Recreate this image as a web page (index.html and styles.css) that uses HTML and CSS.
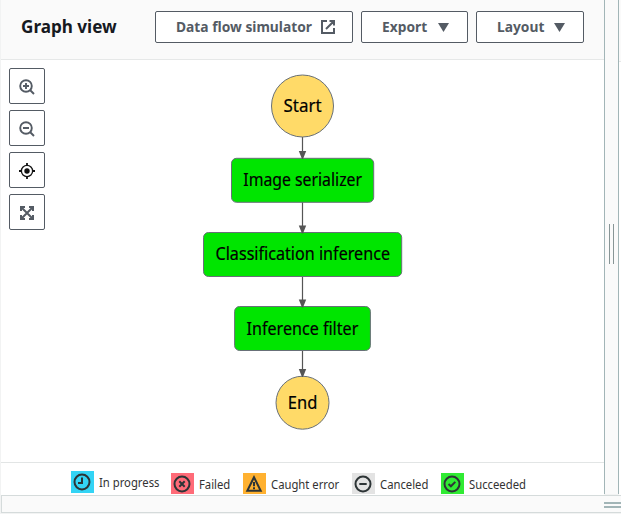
FILE: index.html
```
<!DOCTYPE html>
<html lang="en">
<head>
<meta charset="utf-8">
<title>Graph view</title>
<link rel="stylesheet" href="styles.css">
</head>
<body>
<div class="app">
  <div class="workspace">
    <main class="panel">
      <header class="header">
        <h1 class="title"><span>Graph view</span></h1>
        <button class="btn btn-sim"><span class="lbl">Data flow simulator</span>
          <svg class="ext" width="16" height="16" viewBox="0 0 16 16"><path d="M7 2H2v12h12V9M9.500 2H14v4.500M14 2L6 10" fill="none" stroke="currentColor" stroke-width="2"/></svg>
        </button>
        <button class="btn btn-export"><span class="lbl">Export</span><svg class="caret" width="11" height="9"><path d="M0 0h11L5.500 9z" fill="currentColor"/></svg></button>
        <button class="btn btn-layout"><span class="lbl">Layout</span><svg class="caret" width="11" height="9"><path d="M0 0h11L5.500 9z" fill="currentColor"/></svg></button>
      </header>
      <section class="canvas">
        <nav class="tools">
          <button class="tool" aria-label="Zoom in"><svg width="16" height="16" viewBox="0 0 16 16" fill="none" stroke="currentColor" stroke-width="1.900"><circle cx="7" cy="7" r="5.800"/><path d="M11 11l4 4M4 7h6M7 4v6"/></svg></button>
          <button class="tool" aria-label="Zoom out"><svg width="16" height="16" viewBox="0 0 16 16" fill="none" stroke="currentColor" stroke-width="1.900"><circle cx="7" cy="7" r="5.800"/><path d="M11 11l4 4M4 7h6"/></svg></button>
          <button class="tool dark" aria-label="Center"><svg width="16" height="16" viewBox="0 0 16 16" fill="none" stroke="currentColor" stroke-width="1.300"><circle cx="8" cy="8" r="5.600"/><circle cx="8" cy="8" r="2.700" fill="currentColor" stroke="none"/><path d="M8 0v3M8 13v3M0 8h3M13 8h3" stroke-width="1.800"/></svg></button>
          <button class="tool" aria-label="Fit"><svg width="16" height="16" viewBox="0 0 16 16" fill="none" stroke="currentColor" stroke-width="2"><path d="M2 2l12 12M14 2L2 14"/><path d="M6 2H2v4M10 2h4v4M2 10v4h4M14 10v4h-4"/></svg></button>
        </nav>
        <svg class="graph" width="603" height="402" viewBox="1 60 603 402">
          <path stroke="#555" stroke-width="1.200" d="M302.500 137v16M302.500 202v26M302.500 276v26M302.500 351v20"/>
          <g stroke="#687078" stroke-width="1">
            <circle cx="302.500" cy="106" r="31" fill="#ffda68"/>
            <circle cx="302.500" cy="402.700" r="26.500" fill="#ffda68"/>
            <g fill="#00e500">
              <rect x="231.500" y="158.300" width="142.200" height="44" rx="5"/>
              <rect x="203.500" y="232.500" width="198.200" height="44" rx="5"/>
              <rect x="234.600" y="306.500" width="135.800" height="44" rx="5"/>
            </g>
          </g>
          <path fill="#555" d="M298.800 151h7.400l-3.200 8h-1zM298.800 225.500h7.400l-3.200 8h-1zM298.800 299.500h7.400l-3.200 8h-1zM298.800 369h7.400l-3.200 8h-1z"/>
          <g class="node-text">
            <text x="283.500" y="112.300" textLength="38" lengthAdjust="spacingAndGlyphs">Start</text>
            <text x="243.300" y="186.300" textLength="118.700" lengthAdjust="spacingAndGlyphs">Image serializer</text>
            <text x="215.500" y="260.300" textLength="174.500" lengthAdjust="spacingAndGlyphs">Classification inference</text>
            <text x="246.600" y="335.300" textLength="111.700" lengthAdjust="spacingAndGlyphs">Inference filter</text>
            <text x="287.800" y="409.300" textLength="29.500" lengthAdjust="spacingAndGlyphs">End</text>
          </g>
        </svg>
      </section>
      <footer class="legend">
        <div class="item progress"><svg class="swatch" viewBox="0 0 23 22"><circle cx="11" cy="11" r="7.500"/><path d="M11 6.500V12H7"/></svg><span>In progress</span></div>
        <div class="item failed"><svg class="swatch" viewBox="0 0 23 22"><circle cx="11" cy="11" r="7.500"/><path d="M8.300 8.300l5.400 5.400M13.700 8.300l-5.400 5.400"/></svg><span>Failed</span></div>
        <div class="item caught"><svg class="swatch" viewBox="0 0 23 22"><path d="M11 4.300L4.300 17.700h13.400z"/><path d="M11 9v4.300M11 14.300v2"/></svg><span>Caught error</span></div>
        <div class="item canceled"><svg class="swatch" viewBox="0 0 23 22"><circle cx="11" cy="11" r="7.500"/><path d="M7.300 11h7.400"/></svg><span>Canceled</span></div>
        <div class="item succeeded"><svg class="swatch" viewBox="0 0 23 22"><circle cx="11" cy="11" r="7.500"/><path d="M7.500 11l2.400 2.300 4.400-4.400"/></svg><span>Succeeded</span></div>
      </footer>
    </main>
    <div class="split-v"><i></i></div>
    <aside class="edge"></aside>
  </div>
  <div class="split-h"><i></i></div>
</div>
</body>
</html>
```
FILE: styles.css
```
* { box-sizing: border-box; }
body { margin: 0; overflow: hidden; background: #f2f3f3; font-family: "Noto Sans", sans-serif; }
.app { width: 621px; height: 514px; display: flex; flex-direction: column; padding-left: 1px; }
.workspace { height: 495px; display: flex; }
.panel { width: 603px; background: #fff; display: flex; flex-direction: column; }
.header { height: 60px; flex: none; background: #fafafa; border-bottom: 1px solid #e6e8e8; display: flex; padding: 11px 0 0 20px; }
.title { margin: 0; width: 134px; font-size: 18.5px; line-height: 30px; font-weight: 700; color: #16191f; white-space: nowrap; }
.title span, .lbl { display: inline-block; transform-origin: 0 50%; }
.title span { transform: scaleX(.925); }
.btn { height: 32px; padding: 0 0 0 20px; display: flex; align-items: center; background: #fff; border: 1px solid #545b64; border-radius: 2px; color: #545b64; font: 700 14.5px/28px "Noto Sans", sans-serif; white-space: nowrap; }
.btn-sim { width: 198px; }
.btn-export { width: 107px; margin-left: 8px; }
.btn-layout { width: 108px; margin-left: 8px; }
.lbl { text-align: left; transform: scaleX(.95); flex: none; margin-bottom: 2px; }
.btn-sim .lbl { width: 144px; }
.btn-export .lbl { width: 56px; }
.btn-layout .lbl { width: 57px; }
.canvas { height: 402px; flex: none; display: grid; }
.canvas > * { grid-area: 1 / 1; }
.tools { display: flex; flex-direction: column; gap: 6px; padding: 8px; z-index: 1; width: 52px; }
.tool { width: 36px; height: 36px; padding: 2px 0 0; display: flex; align-items: center; justify-content: center; background: #fff; border: 1px solid #545b64; border-radius: 2px; color: #545b64; }
.dark { color: #111; }
.graph { display: block; }
.node-text { font: 400 17.5px "Noto Sans", sans-serif; fill: #000; stroke: #000; stroke-width: .2px; }
.legend { height: 32px; border-top: 1px solid #e2e5e5; display: flex; align-items: flex-start; padding: 10px 0 0 70px; overflow: hidden; }
.item { display: flex; align-items: center; height: 22px; font-size: 12px; color: #333; white-space: nowrap; }
.item span { transform: scaleX(.94); transform-origin: 0 50%; }
.swatch { width: 23px; height: 22px; flex: none; margin-right: 5px; fill: none; stroke: #2d3436; stroke-width: 2; }
.progress { width: 100px; margin-top: -2px; }
.failed { width: 72px; }
.caught { width: 109px; }
.canceled { width: 89px; }
.progress .swatch { background: #33d4f5; }
.failed .swatch { background: #ff6b78; }
.caught .swatch { background: #ffb130; }
.canceled .swatch { background: #e3e3e3; }
.succeeded .swatch { background: #30eb33; }
.split-v { width: 15px; height: 494px; background: #fafafa; border: solid #a2b5b7; border-width: 0 1px; display: flex; align-items: center; padding-left: 4px; }
.split-v i { width: 5px; height: 40px; border: solid #879596; border-width: 0 1px; margin-bottom: 6px; }
.edge { flex: 1; background: linear-gradient(#fafafa 61px, #e6e8e8 61px 62px, #fff 62px); }
.split-h { height: 18px; background: #fafafa; border: solid #d5dbdb; border-width: 1px 0 1px 1px; display: flex; align-items: center; justify-content: flex-end; }
.split-h i { width: 17px; height: 6px; border: solid #a2b5b7; border-width: 2px 0; margin-top: 2px; }
```
